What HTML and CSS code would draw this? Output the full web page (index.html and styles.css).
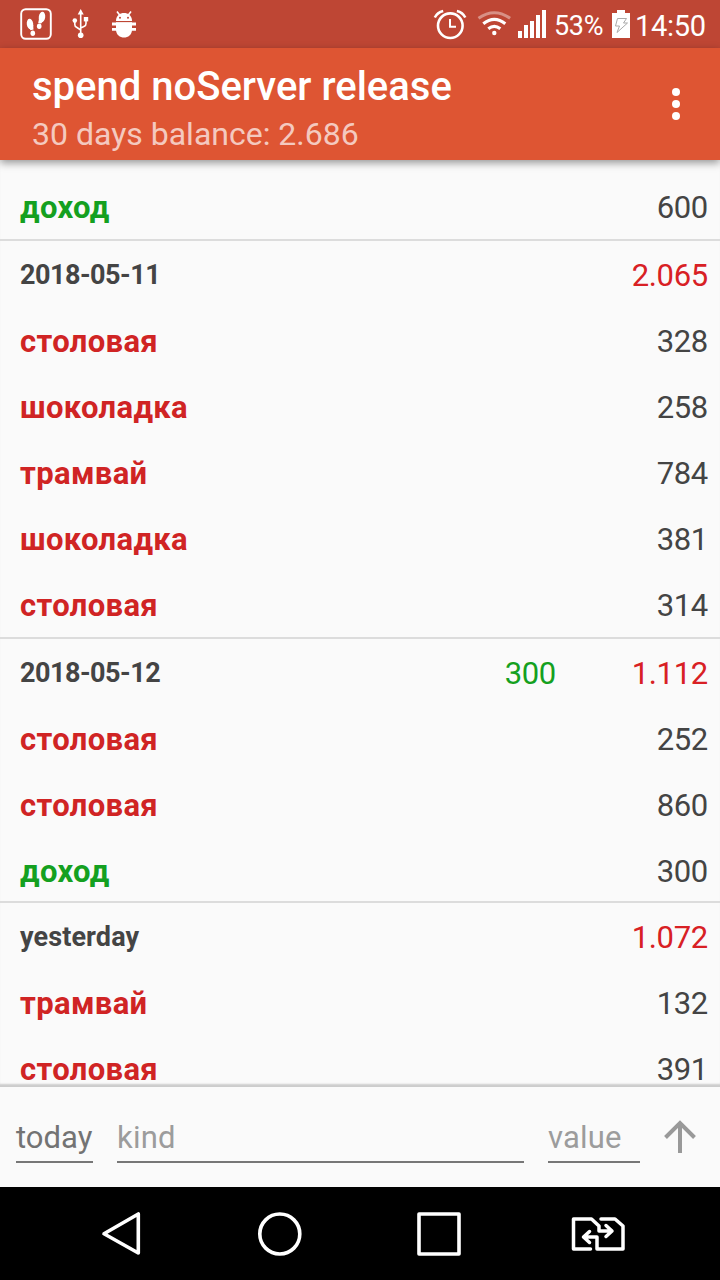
FILE: index.html
```html
<!DOCTYPE html>
<html lang="en">
<head>
<meta charset="utf-8">
<title>spend</title>
<link rel="stylesheet" href="styles.css">
</head>
<body>
<div class="screen">
  <div class="status">
    <svg width="160" height="48" viewBox="0 0 160 48">
      <rect x="21.200" y="9.200" width="29.600" height="29.600" rx="4.500" fill="none" stroke="#fff" stroke-width="1.900"/>
      <g fill="#fff">
        <ellipse cx="30" cy="24" rx="3.200" ry="5.200" transform="rotate(-8 30 24)"/>
        <ellipse cx="32.800" cy="33.300" rx="2.300" ry="2.700"/>
        <path d="M28.500 26l4.700-1 .3 4.500-3 .7z"/>
        <ellipse cx="42" cy="17" rx="3.200" ry="5.200" transform="rotate(8 42 17)"/>
        <ellipse cx="39.200" cy="26.300" rx="2.300" ry="2.700"/>
        <path d="M39 19l4.800 1-2.600 3.600-3-.5z"/>
        <path d="M80.700 9l3 5.500h-6z"/>
        <circle cx="80.700" cy="35.200" r="2.800"/>
        <circle cx="74.800" cy="20.600" r="2.300"/>
        <rect x="83.800" y="17" width="4.400" height="4.400"/>
      </g>
      <path d="M80.700 13v22M74.800 21v3.500q0 2 1.800 2.800l4.100 2.700M86 20v3.500q0 2-1.600 2.700l-3.700 1.800" fill="none" stroke="#fff" stroke-width="1.600"/>
      <g fill="#fff">
        <path d="M116 20.900c0-10.500 16-10.500 16 0z"/>
        <path d="M116 22.300h16v7.200c0 10.800-16 10.800-16 0z"/>
        <path d="M112 22.600h24v2.800h-24zM112 28h24v2.800h-24z"/>
      </g>
      <path d="M117 11.500l3 4M131 11.500l-3 4" stroke="#fff" stroke-width="1.600"/>
      <circle cx="120" cy="17.700" r="1" fill="#be4634"/><circle cx="128" cy="17.700" r="1" fill="#be4634"/>
    </svg>
    <div class="status-right">
      <svg width="120" height="48" viewBox="430 0 120 48">
        <g fill="none" stroke="#fff">
          <circle cx="450.300" cy="25.700" r="12.300" stroke-width="2.600"/>
          <path d="M450 19v7.800h6" stroke-width="2"/>
          <path d="M434.800 17.500q2.500-5 8.400-6.500M465.300 17.500q-2.500-5-8.400-6.500" stroke-width="2.600"/>
          <path d="M478.500 18.200q15.800-11 31.600 0" stroke-width="3" opacity=".4"/>
          <path d="M483.300 23.700q11-8.600 22 0M488.300 28.700q6-4.600 12 0" stroke-width="3.200"/>
        </g>
        <g fill="#fff">
          <circle cx="494.300" cy="33" r="2.200"/>
          <path d="M518 31h4v7h-4zM524 25h4v13h-4zM530 21h4v17h-4zM536 15h4v23h-4zM542 10h4v28h-4z"/>
        </g>
      </svg>
      <span class="percent">53%</span>
      <svg class="battery" width="18" height="28" viewBox="0 0 18 28">
        <path d="M0 3h5V0h8v3h5v25H0z" fill="#fff"/>
        <path d="M5.500 8.500h9l-3 4.500h4L5 22.500l2.500-6.500H3.500z" fill="none" stroke="#aaa" stroke-width="1"/>
      </svg>
      <span class="clock">14:50</span>
    </div>
  </div>
  <header class="appbar">
    <div class="titles">
      <div class="title">spend noServer release</div>
      <div class="subtitle">30 days balance: 2.686</div>
    </div>
    <svg width="8" height="32" viewBox="0 0 8 32" fill="#fff"><circle cx="4" cy="4" r="4"/><circle cx="4" cy="16" r="4"/><circle cx="4" cy="28" r="4"/></svg>
  </header>
  <main class="list">
    <div class="row income last"><b>доход</b><span>600</span></div>
    <div class="row day"><b>2018-05-11</b><span class="out">2.065</span></div>
    <div class="row"><b>столовая</b><span>328</span></div>
    <div class="row"><b>шоколадка</b><span>258</span></div>
    <div class="row"><b>трамвай</b><span>784</span></div>
    <div class="row"><b>шоколадка</b><span>381</span></div>
    <div class="row last"><b>столовая</b><span>314</span></div>
    <div class="row day"><b>2018-05-12</b><span class="in">300</span><span class="out">1.112</span></div>
    <div class="row"><b>столовая</b><span>252</span></div>
    <div class="row"><b>столовая</b><span>860</span></div>
    <div class="row income short"><b>доход</b><span>300</span></div>
    <div class="row day"><b class="word">yesterday</b><span class="out">1.072</span></div>
    <div class="row"><b>трамвай</b><span>132</span></div>
    <div class="row"><b>столовая</b><span>391</span></div>
  </main>
  <div class="entry">
    <div class="field date">today</div>
    <div class="field kind">kind</div>
    <div class="field value">value</div>
    <svg class="send" width="32" height="34" viewBox="0 0 32 34" fill="none" stroke="#999" stroke-width="4"><path d="M1.500 17.500L16 3l14.500 14.500M16 3.500V33"/></svg>
  </div>
  <nav class="navbar">
    <svg width="720" height="93" viewBox="0 1187 720 93" fill="none" stroke="#fff" stroke-width="3.600" stroke-linejoin="round">
      <path d="M138.300 1214v39L104 1233.800z"/>
      <circle cx="279.800" cy="1234" r="20"/>
      <path d="M419 1214h40v40h-40z"/>
      <path d="M590.500 1249h-17v-30h18l7.500 7v5h12M606 1225.500l6 5.500-6 5.500M601 1219h14l8 7v23h-26v-12h-12M589.500 1231.500l-6 5.500 6 5.500" stroke-width="3.500" stroke-linecap="round"/>
    </svg>
  </nav>
</div>
</body>
</html>
```
FILE: styles.css
```css
body { margin: 0; }
.screen {
  width: 720px;
  height: 1280px;
  display: flex;
  flex-direction: column;
  overflow: hidden;
  background: #fafafa;
  font-family: Roboto, "Noto Sans", sans-serif;
  color: #444;
}
svg { display: block; flex: none; }
.status {
  flex: none;
  height: 48px;
  display: flex;
  justify-content: space-between;
  background: #be4634;
  color: #fff;
}
.status-right { display: flex; align-items: center; padding-right: 14px; }
.percent { width: 57px; margin-left: 4px; padding-top: 3px; font-size: 27px; letter-spacing: -.3px; line-height: 48px; }
.battery { margin: 0 5px 0 1px; }
.clock { width: 71px; padding-top: 3px; font-size: 29px; letter-spacing: -.3px; line-height: 48px; white-space: nowrap; }
.appbar {
  flex: none;
  z-index: 1;
  height: 112px;
  box-sizing: border-box;
  display: flex;
  align-items: center;
  justify-content: space-between;
  padding: 0 40px 0 32px;
  background: #de5533;
  box-shadow: 0 3px 8px rgba(0, 0, 0, .4);
}
.titles { padding-top: 11px; }
.title { font-size: 40px; line-height: 49px; font-weight: 500; color: #fff; white-space: nowrap; }
.subtitle { font-size: 32px; line-height: 47px; color: rgba(255, 255, 255, .7); }
.list {
  height: 926px;
  flex: none;
  box-sizing: border-box;
  padding-top: 15px;
  overflow: hidden;
  box-shadow: inset 0 -3px 2px -1px #ccc;
}
.row {
  height: 66px;
  box-sizing: border-box;
  display: flex;
  align-items: center;
  padding: 0 12px 0 20px;
  font-size: 31px;
  line-height: 36px;
}
.row span { letter-spacing: -.3px; }
.row b { flex: 1; color: #d02424; letter-spacing: .35px; }
.row.income b { color: #14a020; }
.last { border-bottom: 2px solid #dcdcdc; padding-top: 2px; }
.short { height: 64px; border-bottom: 2px solid #dcdcdc; padding-top: 4px; }
.day { height: 68px; }
.day b { font-size: 27px; color: #444; letter-spacing: -.5px; }
.day .word { letter-spacing: .1px; }
.day span { padding-top: 2px; }
.day .in { color: #14a020; }
.out { width: 152px; text-align: right; color: #d82024; }
.entry {
  flex: none;
  height: 101px;
  box-sizing: border-box;
  display: flex;
  padding: 30px 24px 24px 16px;
  border-top: 1px solid #ccc;
  font-size: 31px;
}
.field {
  box-sizing: border-box;
  height: 46px;
  margin-right: 24px;
  line-height: 42px;
  border-bottom: 2px solid #777;
  color: #9c9c9c;
}
.date { width: 77px; color: #737373; }
.kind { width: 407px; letter-spacing: .2px; }
.value { width: 92px; letter-spacing: .2px; }
.send { margin-top: 3px; }
.navbar { flex: none; height: 93px; background: #000; }
```
